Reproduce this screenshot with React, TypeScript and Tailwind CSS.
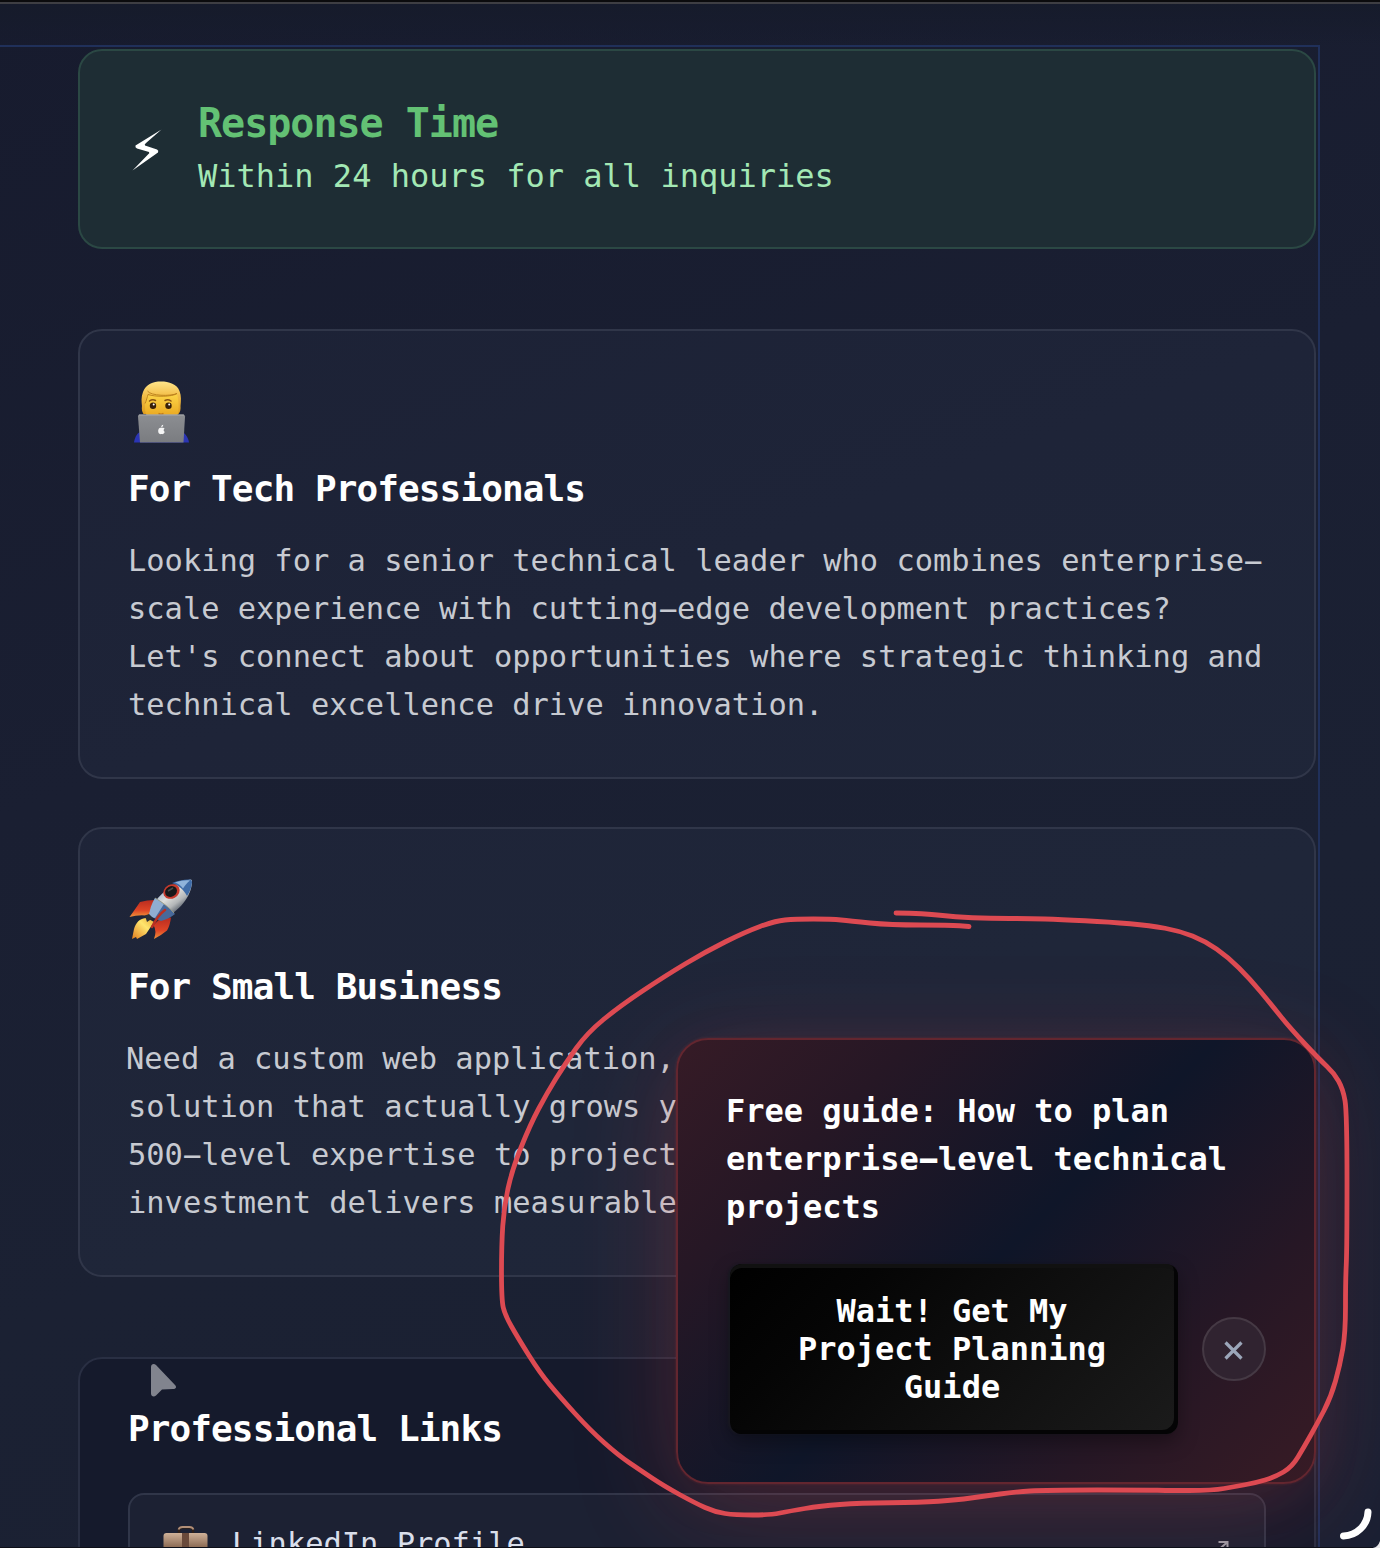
import React from "react";

const strokePoints: [number, number][] = [
  [896, 913], [925, 913.5], [955, 917], [990, 918.5], [1030, 918.5], [1060, 919.5], [1110, 922], [1150, 925.5],
  [1180, 931], [1205, 941], [1228, 957], [1250, 979], [1270, 1003], [1290, 1028], [1320, 1060], [1334, 1073],
  [1343, 1089], [1347, 1112], [1347, 1250], [1345.5, 1280], [1345.5, 1333], [1340, 1365], [1331, 1397], [1317, 1424],
  [1304, 1447], [1292, 1467], [1275, 1477], [1255, 1483], [1235, 1486.5], [1213, 1490.5], [1165, 1490.5],
  [1150, 1490], [1045, 1490], [1015, 1492], [985, 1496], [957, 1500], [920, 1502.5], [860, 1503], [820, 1506],
  [790, 1511], [770, 1515], [735, 1515], [715, 1512], [695, 1503], [664, 1486], [640, 1470], [618, 1455],
  [590, 1430], [560, 1397], [540, 1373], [518, 1338], [505, 1315], [501.5, 1300], [501.5, 1245], [504, 1207],
  [512, 1170], [530, 1125], [547, 1093], [565, 1064], [587, 1033], [620, 1006], [665, 976], [705, 952],
  [745, 932], [775, 921], [795, 919], [832, 919], [850, 921], [890, 925], [950, 925], [969, 926.5],
];

/** Joins points with quadratic segments through their midpoints. */
function smooth(points: [number, number][]) {
  let d = `M${points[0][0]} ${points[0][1]}`;
  for (let i = 1; i < points.length - 1; i++) {
    const [x, y] = points[i];
    const [nx, ny] = points[i + 1];
    d += ` Q${x} ${y} ${(x + nx) / 2} ${(y + ny) / 2}`;
  }
  const last = points[points.length - 1];
  return `${d} L${last[0]} ${last[1]}`;
}

function Dash() {
  return <span className="inline-block scale-x-[2.1]">-</span>;
}

function BoldDash() {
  return <span className="inline-block scale-x-[1.75]">-</span>;
}

function Technologist() {
  return (
    <svg className="block h-16 w-16" viewBox="0 0 64 64">
      <defs>
        <linearGradient id="hair" x1="0" y1="0" x2="0" y2="1">
          <stop offset="0" stopColor="#ffe58a" />
          <stop offset="0.450" stopColor="#f3bd46" />
          <stop offset="1" stopColor="#dd9d1f" />
        </linearGradient>
        <linearGradient id="face" x1="0" y1="0" x2="0" y2="1">
          <stop offset="0" stopColor="#fdd548" />
          <stop offset="1" stopColor="#eaa922" />
        </linearGradient>
        <linearGradient id="laptop" x1="0" y1="0" x2="0" y2="1">
          <stop offset="0" stopColor="#8c8e92" />
          <stop offset="1" stopColor="#7a7c80" />
        </linearGradient>
      </defs>
      <path d="M6 61.500c1-6 3-10 8-11h38c5 1 8 5 9 11z" fill="#2b35b4" />
      <path d="M15.500 33c-1.500-2-2-5-1.500-8-.5-4-1-9 1-14C18 3 25 .5 33 .5S49 3 51.500 10c2 5 1.500 10 1 15 .3 3-.2 6-2 8z" fill="url(#hair)" />
      <path d="M19 14c8-1 23 1.500 30-1 1.500 6 2.500 14 .5 21.500h-31C16 28 17 20 19 14z" fill="url(#face)" />
      <path d="M19.500 10c3 5 23 5.500 29.500 2.500-5 3.500-22 3.500-29 1-1 3-1.500 6-3 9" fill="none" stroke="#b97d1c" strokeWidth="0.900" />
      <path d="M21.500 20q3-2 6-.5M37 19.500q3-1.500 6 .5" fill="none" stroke="#8a5413" strokeWidth="1.500" strokeLinecap="round" />
      <circle cx="25" cy="24.800" r="3.200" fill="#382009" />
      <circle cx="40.500" cy="24.800" r="3.200" fill="#382009" />
      <circle cx="25.700" cy="23.600" r="1" fill="#fff" />
      <circle cx="41.200" cy="23.600" r="1" fill="#fff" />
      <path d="M30.500 32.500q2.500 1.500 5 0" fill="none" stroke="#c17a18" strokeWidth="1.500" />
      <path d="M11.500 33.500h43.500q2 0 2 2L55.500 61.500H12L10 35.500q0-2 1.500-2z" fill="url(#laptop)" />
      <path d="M11 34h45" stroke="#b1b2b5" strokeWidth="0.800" />
      <path d="M33.300 46.800c-3.400-1-4.200 5-1.400 6.300 1 .4 1.600-.3 2.200 0 1.700.4 2.800-2 2.500-2.300-1.500-.8-1-2.600 0-3.200-1-1.400-2.400-.9-3.300-.8zM33.200 46.300c0-1.500.8-2.500 2-2.500.1 1.300-.8 2.500-2 2.500z" fill="#f5f5f5" />
    </svg>
  );
}

function Rocket() {
  return (
    <svg className="block h-16 w-16" viewBox="0 0 64 64">
      <defs>
        <linearGradient id="hull" x1="24" y1="14" x2="42" y2="38" gradientUnits="userSpaceOnUse">
          <stop offset="0" stopColor="#8fa9cb" />
          <stop offset="0.450" stopColor="#dededb" />
          <stop offset="0.750" stopColor="#b3b6b8" />
          <stop offset="1" stopColor="#5b636e" />
        </linearGradient>
        <linearGradient id="fin" x1="0" y1="0" x2="0" y2="1">
          <stop offset="0" stopColor="#b92c20" />
          <stop offset="0.600" stopColor="#df4526" />
          <stop offset="1" stopColor="#f09339" />
        </linearGradient>
        <linearGradient id="flame" x1="1" y1="0" x2="0" y2="1">
          <stop offset="0" stopColor="#e9a936" />
          <stop offset="0.400" stopColor="#ffe66e" />
          <stop offset="1" stopColor="#e17c1e" />
        </linearGradient>
      </defs>
      <path d="M27 21q-8 0-15 2Q8 29 1.500 38q10-3 21-1z" fill="url(#fin)" />
      <path d="M43 38.500q-1 8-4 13-6 5-13 8.500 3-8-.5-14L33 39z" fill="url(#fin)" />
      <path d="M19 39c-8 0-11 5-13 11l-2 10 4-2 1 2 9-5 8-12z" fill="url(#flame)" />
      <path d="M21 37c3-15 17-31 41-36.500q2.500 0 2 3c-1 14-12 29-31 37.500z" fill="url(#hull)" />
      <path d="M44 4C50 1.500 56 .3 62 .5q2 0 2 3c-.5 5-2 9-5 13.500-3-6-8.500-11-15-13z" fill="#3f6ca8" />
      <path d="M47 3.500C53 1.500 58 1 62 1.500c-3 2-5 5-7 8-2-3-5-5-8-6z" fill="#8fb3db" />
      <path d="M27 19c7 4 15 10 20 16q-6 5-14 7l-12-5z" fill="#48699a" />
      <path d="M27 19l9 6-9 14-6-2q1-10 6-18z" fill="#90add1" />
      <path d="M27 19c7 4 15 10 19 15" fill="none" stroke="#aaa682" strokeWidth="0.800" />
      <ellipse cx="43.500" cy="12.500" rx="8.500" ry="7" transform="rotate(-28 43.500 12.500)" fill="#c63a2d" />
      <ellipse cx="43" cy="12.500" rx="6.200" ry="5.200" transform="rotate(-28 43 12.500)" fill="#171819" />
      <path d="M40 12l5-3" stroke="#4a4a4a" strokeWidth="1.500" />
      <path d="M17 36.500l4-1.500 4 4-6 4z" fill="#292f38" />
      <path d="M37 31Q30 36 24 48" fill="none" stroke="#bb3021" strokeWidth="2.500" strokeLinecap="round" />
    </svg>
  );
}

function Briefcase() {
  return (
    <svg className="block h-12 w-12" viewBox="0 0 48 48">
      <defs>
        <linearGradient id="case" x1="0" y1="0" x2="0" y2="1">
          <stop offset="0" stopColor="#cfb198" />
          <stop offset="0.450" stopColor="#8d6c55" />
          <stop offset="1" stopColor="#604334" />
        </linearGradient>
      </defs>
      <path d="M17 13v-3q0-2.500 3-2.500h8q3 0 3 2.500v3" fill="none" stroke="#2e2019" strokeWidth="2.500" />
      <path d="M16.500 9.500q1-2.500 4-2.500h7q3 0 4 2.500" fill="none" stroke="#b18f78" strokeWidth="1.800" />
      <rect x="1.500" y="13" width="44" height="31" rx="3" fill="url(#case)" />
      <path d="M20 13h7v31h-7z" fill="#69493a" />
    </svg>
  );
}

function AudienceCard({ icon, title, children }: { icon: React.ReactNode; title: string; children: React.ReactNode }) {
  return (
    <section className="mb-12 h-[450px] rounded-3xl border-2 border-[#303649] bg-[#96c3d7]/[0.035] px-12 pt-[50px]">
      {icon}
      <h3 className="mt-[22px] text-[36px] leading-[44px] font-bold tracking-tight text-white">{title}</h3>
      <p className="mt-[26px] text-[30.4px] leading-[48px] whitespace-pre text-[#c7cad1]">{children}</p>
    </section>
  );
}

function GuidePopup() {
  return (
    <aside className="absolute top-[1038px] left-[676px] h-[446px] w-[640px] rounded-[32px] border-2 border-[#63262f] bg-[linear-gradient(135deg,#361b26_0%,#261725_22%,#0f1629_50%,#261725_76%,#381b25_100%)] bg-origin-border px-12 pt-[47px] shadow-[0_24px_110px_rgba(239,68,68,0.2),0_10px_60px_rgba(239,68,68,0.06),0_0_3px_rgba(239,68,68,0.2)]">
      <p className="text-[32px] leading-[48px] font-bold whitespace-pre text-white">
        Free guide: How to plan{"\n"}enterprise<BoldDash />level technical{"\n"}projects
      </p>
      <div className="mt-[33px] flex items-center justify-between">
        <button className="ml-1 h-[170px] w-[448px] rounded-xl bg-[linear-gradient(135deg,#000_0%,#050505_25%,#1b1b1b_100%)] pr-[50px] pl-[46px] text-[32px] leading-[38px] font-bold text-white shadow-[inset_-4px_-4px_0_#040405,inset_0_4px_0_#111,-2px_0_2px_#181820,0_8px_20px_rgba(0,0,0,0.35)]">
          Wait! Get My Project Planning Guide
        </button>
        <button className="flex h-16 w-16 items-center justify-center rounded-full border-2 border-[#453944] bg-[#302330]">
          <svg className="mt-[3px] h-5 w-5" viewBox="0 0 20 20" fill="none" stroke="#9ba6b9" strokeWidth="3.200">
            <path d="M1.500 1.500l16 16M17.500 1.500l-16 16" />
          </svg>
        </button>
      </div>
    </aside>
  );
}

export default function App() {
  return (
    <div className="relative h-[1548px] w-[1380px] overflow-hidden bg-[linear-gradient(160deg,#171b2e_0%,#1a1f32_40%,#1b2133_65%,#1a2033_100%)] font-['DejaVu_Sans_Mono',monospace]">
      <div className="h-1 border-b-2 border-[#3e3e43] bg-[#0b0b0d]" />
      <div className="h-[41px] bg-linear-to-b from-[#161b2b] to-transparent" />
      <main className="h-[1520px] w-[1320px] border-t-2 border-r-2 border-[#20305a] pt-0.5 pl-[78px]">
        <div className="w-[1238px]">
          <section className="flex h-[200px] rounded-3xl border-2 border-[#2b4844] bg-[#1e2d34] pt-[46px] pl-[51px]">
            <svg className="mt-8 h-[43px] w-8" viewBox="0 0 32 43">
              <path d="M30.500 0.500L4.500 16.500Q3.800 18.500 6 19.500l12 3.500q1 1-1 2.500L1.500 41.500 27 23.500q1-2-1-3L14 16.500q-1-1 1-2.500z" fill="#fff" />
            </svg>
            <div className="ml-[35px]">
              <h2 className="text-[40px] leading-[52px] font-bold tracking-tight text-[#63c174]">Response Time</h2>
              <p className="mt-[3px] text-[32px] leading-[48px] text-[#a3e8b4]">Within 24 hours for all inquiries</p>
            </div>
          </section>

          <div className="mt-20">
            <AudienceCard icon={<Technologist />} title="For Tech Professionals">
              Looking for a senior technical leader who combines enterprise<Dash />{"\n"}
              scale experience with cutting<Dash />edge development practices?{"\n"}
              Let's connect about opportunities where strategic thinking and{"\n"}
              technical excellence drive innovation.
            </AudienceCard>
            <AudienceCard icon={<Rocket />} title="For Small Business">
              <span className="-ml-0.5">Need a custom web application,</span>{"\n"}
              solution that actually grows y{"\n"}
              500<Dash />level expertise to project{"\n"}
              investment delivers measurable
            </AudienceCard>
          </div>

          <section className="mt-20 h-[400px] rounded-3xl border-2 border-[#292f43] bg-[#151a2c] px-12 pt-12">
            <h3 className="text-[36px] leading-[44px] font-bold tracking-tight text-white">Professional Links</h3>
            <div className="mt-[42px] flex h-[102px] items-center rounded-2xl border-2 border-[#303649] bg-[#1c2133] px-8">
              <Briefcase />
              <span className="ml-[22px] text-[30.4px] leading-[48px] text-[#d9deea]">LinkedIn Profile</span>
              <svg className="mt-1 mr-0.5 ml-auto h-4 w-4" viewBox="0 0 16 16" fill="none" stroke="#9a9ba5" strokeWidth="2">
                <path d="M2 14L13 4.500M4.500 4h9v9" />
              </svg>
            </div>
          </section>
        </div>
      </main>

      <GuidePopup />

      <svg className="pointer-events-none absolute inset-0 h-full w-full" viewBox="0 0 1380 1548" fill="none">
        <path d={smooth(strokePoints)} stroke="#dd4a52" strokeWidth="4.800" strokeLinecap="round" strokeLinejoin="round" />
        <path d="M151 1367c0-3 3-4 5-2l19 20c2 2 1 4-2 4l-11 .5-6 6c-2 2-5 1-5-2z" fill="#81848e" />
        <path d="M1368 1512A25 25 0 0 1 1343.500 1536" stroke="#fff" strokeWidth="7" strokeLinecap="round" />
        <path d="M1380 1541v7h-7q5-1 7-7z" fill="#e8e8ea" />
        <path d="M0 1547.500H1373" stroke="#0d0f18" />
      </svg>
    </div>
  );
}
